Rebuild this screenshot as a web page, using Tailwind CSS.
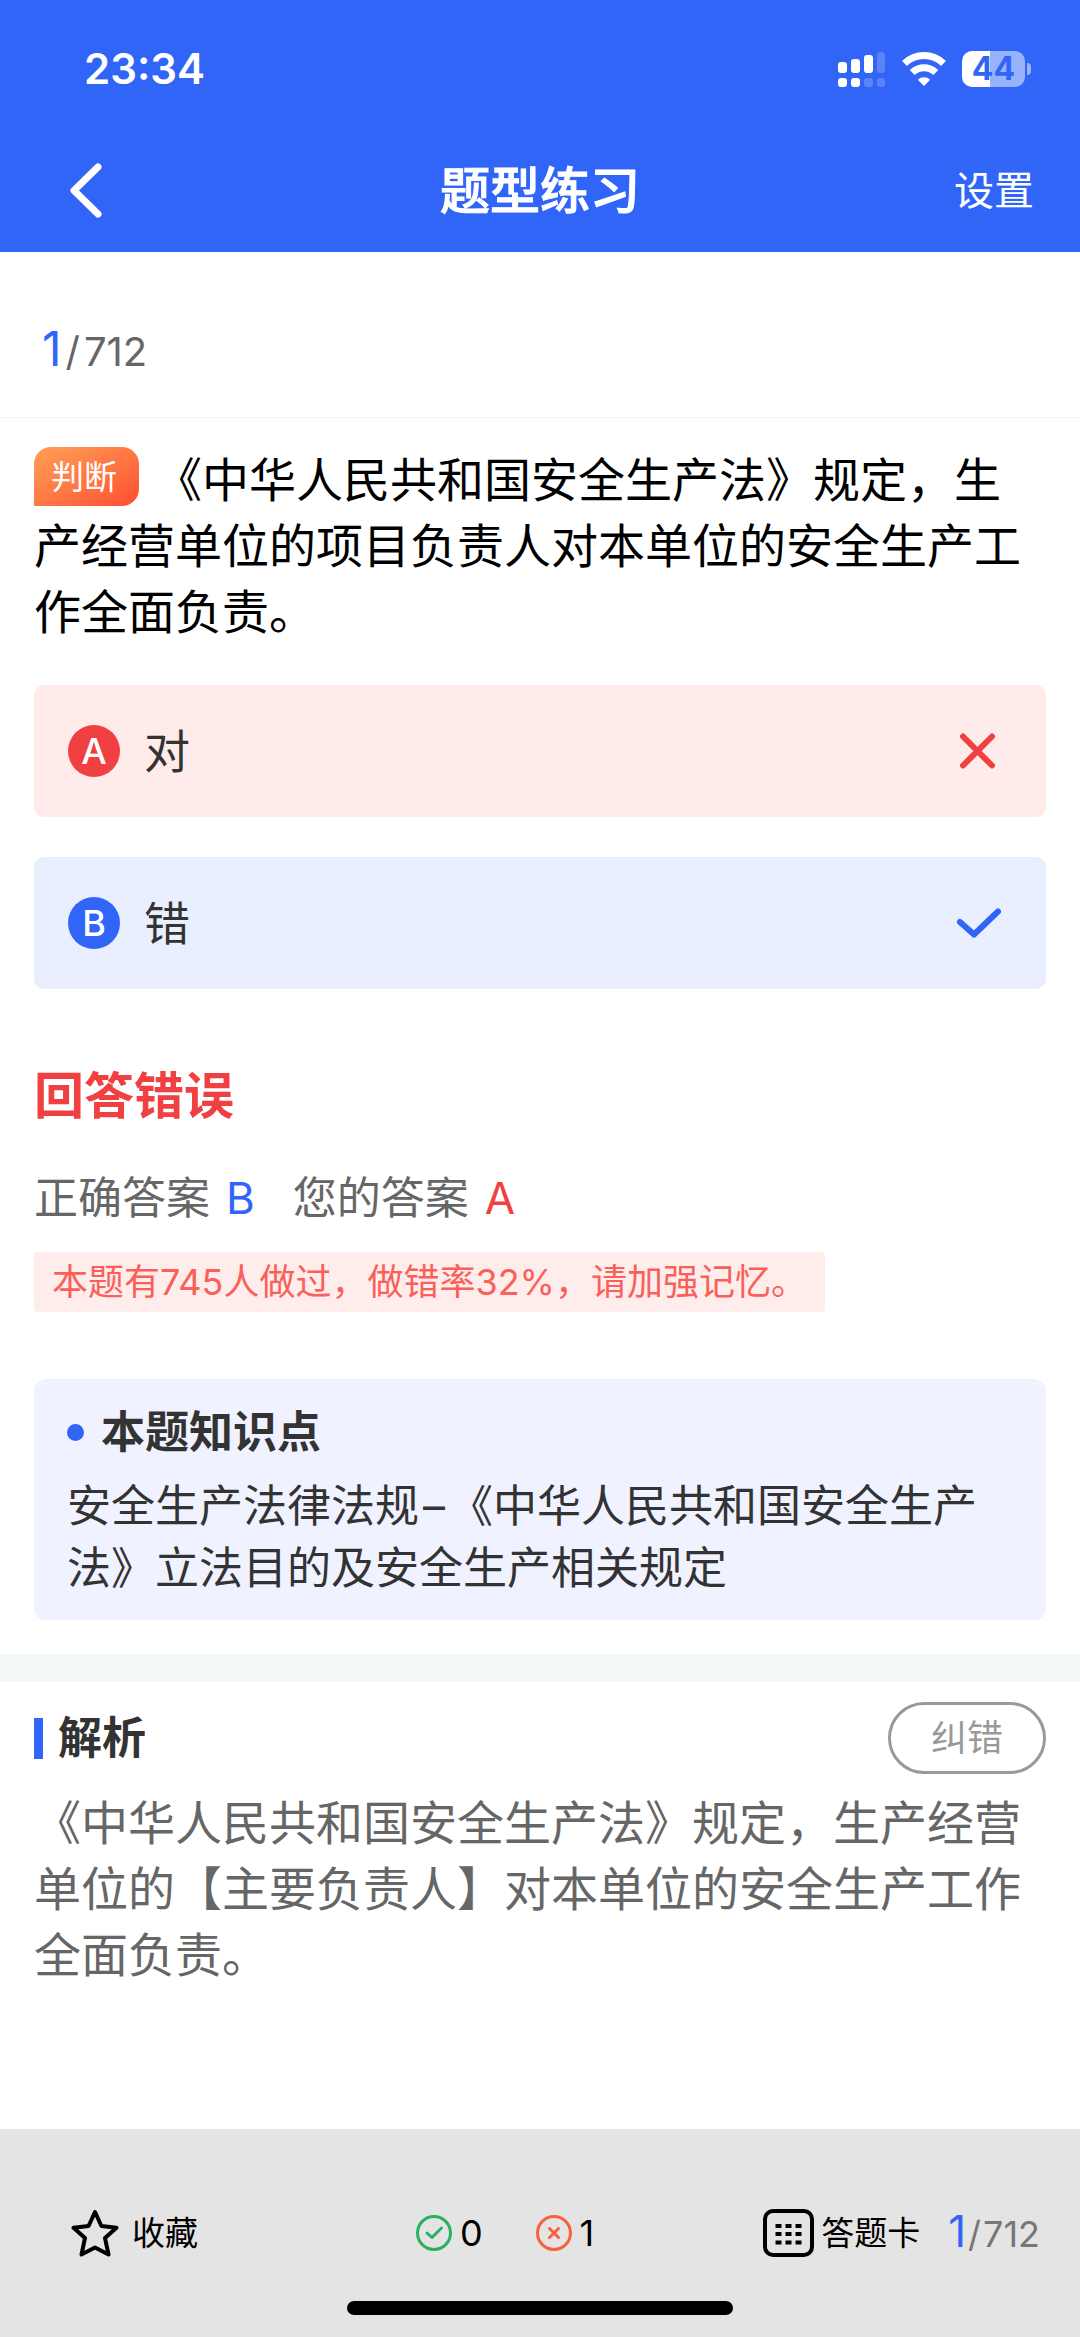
<!DOCTYPE html>
<html lang="zh-CN">
<head>
<meta charset="utf-8">
<meta name="viewport" content="width=device-width, initial-scale=1">
<title>题型练习</title>
<script src="https://cdn.jsdelivr.net/npm/@tailwindcss/browser@4"></script>
</head>
<body class="flex min-h-screen flex-col bg-white font-['Inter','Noto_Sans_CJK_SC',sans-serif] text-[#333]">

<header class="bg-[#3165f7] text-white">
  <!-- Status bar -->
  <div class="flex h-[128px] items-center justify-between pt-[10px] pr-[49px] pl-[84px]">
    <span class="text-[42px] leading-[48px] font-semibold">23:34</span>
    <div class="flex items-center gap-4">
      <svg class="h-[36px] w-[48px]" viewBox="0 0 48 36" fill="#fff" aria-hidden="true">
        <rect x="0" y="11" width="9" height="11" rx="3"/>
        <rect x="13" y="8" width="9" height="14" rx="3"/>
        <rect x="26" y="4" width="9" height="18" rx="3"/>
        <rect x="39" y="1" width="8" height="21" rx="3" opacity=".2"/>
        <rect x="0" y="27" width="9" height="9" rx="3"/>
        <rect x="13" y="27" width="9" height="9" rx="3"/>
        <rect x="26" y="27" width="9" height="9" rx="3" opacity=".2"/>
        <rect x="39" y="27" width="8" height="9" rx="3" opacity=".2"/>
      </svg>
      <svg class="h-[36px] w-[44px]" viewBox="0 0 44 36" fill="none" stroke="#fff" stroke-width="7" aria-hidden="true">
        <path d="M2.500 12.500a28 28 0 0 1 39 0"/>
        <path d="M10.200 21.500a17 17 0 0 1 23.600 0"/>
        <path d="M22 35l-6.200-6.300a9 9 0 0 1 12.400 0z" fill="#fff" stroke="none"/>
      </svg>
      <div class="flex items-center gap-[2px]">
        <div class="flex h-[36px] w-[63px] items-center justify-center rounded-[10px] bg-linear-to-r from-white from-45% to-white/50 to-45% text-[32px] leading-[36px] font-bold text-[#3165f7]">44</div>
        <div class="h-[12px] w-[4px] rounded-r-full bg-white/50"></div>
      </div>
    </div>
  </div>
  <!-- Navigation bar -->
  <div class="grid h-[124px] grid-cols-[1fr_auto_1fr] items-center pt-[2px] pr-[46px] pl-[68px]">
    <button class="justify-self-start" aria-label="返回">
      <svg class="h-[56px] w-[36px]" viewBox="0 0 36 56" fill="none" stroke="#fff" stroke-width="7" stroke-linecap="round" stroke-linejoin="round"><path d="M30 4L6 27.500L30 51"/></svg>
    </button>
    <h1 class="pr-[22px] text-[50px] leading-[60px] font-medium [-webkit-text-stroke:1px_white]">题型练习</h1>
    <button class="justify-self-end text-[40px] leading-[60px]">设置</button>
  </div>
</header>

<main class="flex-1">
  <div class="flex h-[166px] items-center border-b border-[#f5f5f5] px-[42px] pt-[32px]">
    <p class="text-[40px] leading-[60px] text-[#666]"><span class="text-[48px] text-[#3165f7]">1</span><span class="mx-1">/</span>712</p>
  </div>

  <section class="px-[34px] pt-[29px]">
    <p class="text-[47px] leading-[66px] text-black"><span class="mr-[16px] inline-flex h-[59px] w-[105px] items-center rounded-[17px] rounded-bl-none bg-linear-to-br from-[#ff9f58] to-[#ff4a30] pl-[17px] align-top text-[33px] leading-[40px] text-white">判断</span>《中华人民共和国安全生产法》规定，生产经营单位的项目负责人对本单位的安全生产工作全面负责。</p>

    <div class="mt-[40px] grid gap-[40px] text-[46px] leading-[60px]">
      <button class="flex h-[132px] items-center rounded-[10px] bg-[#feebea] px-[34px] text-left">
        <span class="flex size-[52px] items-center justify-center rounded-full bg-[#f04042] text-[36px] font-medium text-white">A</span>
        <span class="ml-[24px] flex-1">对</span>
        <svg class="size-[70px]" viewBox="0 0 70 70" fill="none" stroke="#f04042" stroke-width="6" stroke-linecap="round" aria-label="错误"><path d="M21 20.500L50 49.500M50 20.500L21 49.500"/></svg>
      </button>
      <button class="flex h-[132px] items-center rounded-[10px] bg-[#e9effe] px-[34px] text-left">
        <span class="flex size-[52px] items-center justify-center rounded-full bg-[#3165f7] text-[36px] font-medium text-white">B</span>
        <span class="ml-[24px] flex-1">错</span>
        <svg class="size-[70px]" viewBox="0 0 70 70" fill="none" stroke="#3165f7" stroke-width="6" stroke-linecap="round" stroke-linejoin="round" aria-label="正确"><path d="M18 34L32 46.500L56 23.500"/></svg>
      </button>
    </div>

    <h2 class="mt-[71px] text-[50px] leading-[72px] font-bold text-[#f04042]">回答错误</h2>
    <p class="mt-[36px] flex text-[44px] leading-[60px] text-[#666]">正确答案<span class="ml-[16px] text-[#3165f7]">B</span><span class="ml-[38px]">您的答案</span><span class="ml-[16px] text-[#f04042]">A</span></p>
    <p class="mt-[24px] inline-block rounded-[4px] bg-[#ffedec] px-[18px] text-[36px] leading-[60px] text-[#fa605a]">本题有745人做过，做错率32%，请加强记忆。</p>

    <div class="mt-[67px] rounded-[12px] bg-[#f0f3ff] px-[33px] pt-[22px] pb-[21px] text-[44px] leading-[62px]">
      <h3 class="mb-[12px] flex items-center gap-[17px] font-bold"><span class="size-[17px] rounded-full bg-[#3165f7]"></span>本题知识点</h3>
      <p>安全生产法律法规<span class="mx-1">–</span>《中华人民共和国安全生产法》立法目的及安全生产相关规定</p>
    </div>
  </section>

  <div class="mt-[34px] h-[28px] bg-[#f3f7f7]"></div>

  <section class="px-[34px] pt-[20px] pb-[48px]">
    <div class="flex items-center justify-between">
      <h2 class="flex items-center gap-[15px] text-[44px] leading-[62px] font-bold"><span class="h-[41px] w-[9px] bg-[#3165f7]"></span>解析</h2>
      <button class="h-[72px] w-[158px] rounded-full border-3 border-[#999] text-[36px] leading-[60px] text-[#999]">纠错</button>
    </div>
    <p class="mt-[16px] text-[47px] leading-[66px] text-[#666]">《中华人民共和国安全生产法》规定，生产经营单位的【主要负责人】对本单位的安全生产工作全面负责。</p>
  </section>
</main>

<footer class="flex h-[208px] flex-col items-center justify-between bg-[#e4e4e4] pb-[22px] text-black">
  <div class="flex w-full items-center justify-between pt-[72px] pr-[40px] pl-[71px] text-[33px] leading-[60px]">
    <button class="flex items-center gap-[13px] pr-12">
      <svg class="size-[48px]" viewBox="0 0 48 48" fill="none" stroke="#000" stroke-width="4" stroke-linejoin="round" aria-hidden="true"><path d="M24 3l6.400 14L45.500 18.800L34 29l3.500 16.500L24 38.500L10.500 45.500L14 29L2.500 18.800L17.600 17z"/></svg>
      收藏
    </button>
    <div class="flex items-center gap-[52px] text-[36px]">
      <span class="flex items-center gap-[7px]">
        <svg class="size-[38px]" viewBox="0 0 38 38" fill="none" stroke="#2bb062" stroke-width="3" stroke-linecap="round" stroke-linejoin="round" aria-label="答对"><circle cx="19" cy="19" r="16.500"/><path d="M12 19l5 4.500l9.500-9.500"/></svg>
        0
      </span>
      <span class="flex items-center gap-[7px]">
        <svg class="size-[38px]" viewBox="0 0 38 38" fill="none" stroke="#fb5f3f" stroke-width="3" stroke-linecap="round" aria-label="答错"><circle cx="19" cy="19" r="16.500"/><path d="M14.500 14.500l9 9M23.500 14.500l-9 9"/></svg>
        1
      </span>
    </div>
    <div class="flex items-center gap-[28px]">
      <button class="flex items-center gap-[7px]">
        <svg class="h-[48px] w-[51px]" viewBox="0 0 51 48" fill="#000" aria-hidden="true">
          <rect x="2" y="2" width="47" height="44" rx="8" fill="none" stroke="#000" stroke-width="4"/>
          <path d="M12.500 15h6v4h-6zM22.500 15h6v4h-6zM32.500 15h6v4h-6zM12.500 23h6v4h-6zM22.500 23h6v4h-6zM32.500 23h6v4h-6zM12.500 31.500h6v4h-6zM22.500 31.500h6v4h-6zM32.500 31.500h6v4h-6z"/>
        </svg>
        答题卡
      </button>
      <p class="text-[36px] text-[#777]"><span class="text-[44px] text-[#3165f7]">1</span><span class="mx-[2px]">/</span>712</p>
    </div>
  </div>
  <div class="h-[14px] w-[386px] rounded-full bg-black"></div>
</footer>

</body>
</html>
